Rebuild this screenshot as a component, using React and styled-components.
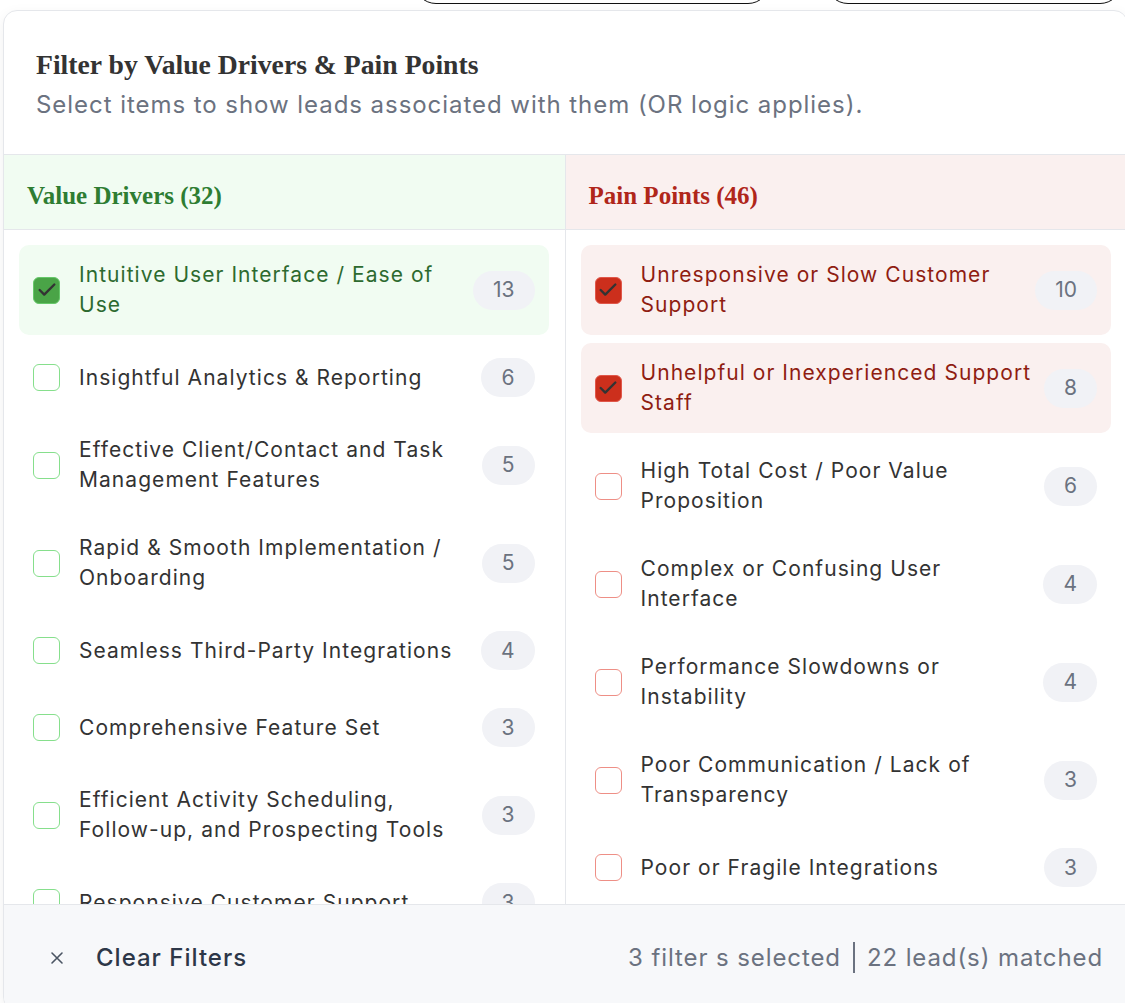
import React from 'react';
import styled, { createGlobalStyle } from 'styled-components';

const GlobalStyle = createGlobalStyle`
  html, body {
    margin: 0;
    padding: 0;
    background: #ffffff;
    overflow: hidden;
  }
  body {
    font-family: Inter, "Noto Sans", "Liberation Sans", sans-serif;
    color: #333333;
  }
`

const Page = styled.div`
  position: relative;
  width: 1125px;
  height: 1003px;
  overflow: hidden;
`

const Toolbar = styled.div`
  display: flex;
  gap: 56px;
  padding-left: 414px;
  margin-top: -40px;
`

const PillButton = styled.div`
  width: ${(p) => p.w}px;
  height: 42px;
  border: 1.5px solid #111;
  border-radius: 24px;
  background: #fff;
`

const Popover = styled.div`
  position: absolute;
  left: 3px;
  top: 10px;
  width: 1125px;
  height: 1001px;
  box-sizing: border-box;
  background: #fff;
  border: 1px solid #e5e7eb;
  border-radius: 14px;
  box-shadow: 0 4px 14px rgba(0, 0, 0, 0.06);
  display: flex;
  flex-direction: column;
  overflow: hidden;
`

const Header = styled.div`
  padding: 38px 32px 31px;
  border-bottom: 1px solid #e5e7eb;
`

const Title = styled.h3`
  margin: 0;
  font-family: "Liberation Serif", "Times New Roman", serif;
  font-weight: 700;
  font-size: 27.7px;
  line-height: 32px;
  color: #333;
`

const Subtitle = styled.p`
  margin: 6px 0 0;
  font-size: 24px;
  line-height: 36px;
  letter-spacing: 0.95px;
  color: #6b7280;
`

const Columns = styled.div`
  flex: 1;
  min-height: 0;
  display: grid;
  grid-template-columns: 1fr 1fr;
`

const Column = styled.div`
  display: flex;
  flex-direction: column;
  min-height: 0;
  border-right: ${(p) => (p.first ? '1px solid #e5e7eb' : 'none')};
`

const ColumnHeader = styled.div`
  height: 75px;
  box-sizing: border-box;
  display: flex;
  align-items: center;
  padding: 8px 23px 0;
  background: ${(p) => (p.tone === 'green' ? '#f1fcf2' : '#faf0ef')};
  border-bottom: 1px solid #e5e7eb;
  font-family: "Liberation Serif", "Times New Roman", serif;
  font-weight: 700;
  font-size: 25px;
  color: ${(p) => (p.tone === 'green' ? '#2e7d32' : '#b0261a')};
`

const List = styled.div`
  flex: 1;
  min-height: 0;
  overflow: hidden;
  padding: 15px 16px 15px 15px;
  display: flex;
  flex-direction: column;
  gap: 8px;
`

const Item = styled.label`
  display: flex;
  align-items: center;
  gap: 10px;
  padding: 15px 14px;
  border-radius: 10px;
  background: ${(p) =>
    p.checked ? (p.tone === 'green' ? '#f1fcf2' : '#faf0ef') : 'transparent'};
  cursor: pointer;
`

const Box = styled.span`
  flex-shrink: 0;
  width: 27px;
  height: 27px;
  margin-right: 9px;
  box-sizing: border-box;
  border-radius: 6px;
  display: flex;
  align-items: center;
  justify-content: center;
  border: 1.5px solid ${(p) => (p.tone === 'green' ? '#86df8c' : '#ee8f86')};
  background: ${(p) =>
    p.checked ? (p.tone === 'green' ? '#4aa447' : '#cc2f1c') : '#fff'};
  ${(p) => p.checked && `border-color: ${p.tone === 'green' ? '#66c86a' : '#e0574a'};`}
`

const Label = styled.span`
  flex: 1;
  font-size: 21px;
  line-height: 30px;
  letter-spacing: 1.05px;
  color: ${(p) =>
    p.checked ? (p.tone === 'green' ? '#2d6a2f' : '#8f1d12') : '#333'};
`

const Count = styled.span`
  flex-shrink: 0;
  padding: 4.5px 20px;
  border-radius: 20px;
  background: #f1f2f6;
  font-size: 21px;
  line-height: 30px;
  color: #6b7280;
`

const Footer = styled.div`
  height: 106px;
  flex-shrink: 0;
  box-sizing: border-box;
  display: flex;
  align-items: center;
  justify-content: space-between;
  padding: 0 24px 0 46px;
  background: #f7f8fa;
  border-top: 1px solid #e5e7eb;
`

const ClearButton = styled.button`
  display: flex;
  align-items: center;
  gap: 32px;
  border: none;
  background: none;
  padding: 0;
  font-family: inherit;
  font-size: 24px;
  font-weight: 500;
  letter-spacing: 1px;
  color: #2d3748;
  cursor: pointer;
`

const Status = styled.div`
  display: flex;
  align-items: center;
  font-size: 24px;
  letter-spacing: 0.9px;
  color: #6b7280;
`

const Divider = styled.span`
  display: inline-block;
  width: 2px;
  height: 31px;
  background: #6b7280;
  margin: 0 12px;
`

const valueDrivers = [
  { label: 'Intuitive User Interface / Ease of Use', count: 13, checked: true },
  { label: 'Insightful Analytics & Reporting', count: 6 },
  { label: 'Effective Client/Contact and Task Management Features', count: 5 },
  { label: 'Rapid & Smooth Implementation / Onboarding', count: 5 },
  { label: 'Seamless Third-Party Integrations', count: 4 },
  { label: 'Comprehensive Feature Set', count: 3 },
  { label: 'Efficient Activity Scheduling, Follow-up, and Prospecting Tools', count: 3 },
  { label: 'Responsive Customer Support', count: 3 },
  { label: 'Customizable Workflows', count: 2 },
];

const painPoints = [
  { label: 'Unresponsive or Slow Customer Support', count: 10, checked: true },
  { label: 'Unhelpful or Inexperienced Support Staff', count: 8, checked: true },
  { label: 'High Total Cost / Poor Value Proposition', count: 6 },
  { label: 'Complex or Confusing User Interface', count: 4 },
  { label: 'Performance Slowdowns or Instability', count: 4 },
  { label: 'Poor Communication / Lack of Transparency', count: 3 },
  { label: 'Poor or Fragile Integrations', count: 3 },
  { label: 'Limited Reporting Capabilities', count: 2 },
];

function CheckMark() {
  return (
    <svg width="22" height="22" viewBox="0 0 24 24" fill="none" stroke="#333" strokeWidth="2.6" strokeLinecap="round" strokeLinejoin="round">
      <path d="M20 6 9 17l-5-5" />
    </svg>
  );
}

function FilterColumn({ title, tone, items, first }) {
  return (
    <Column first={first}>
      <ColumnHeader tone={tone}>{title}</ColumnHeader>
      <List>
        {items.map((item) => (
          <Item key={item.label} tone={tone} checked={item.checked}>
            <Box tone={tone} checked={item.checked}>
              {item.checked ? <CheckMark /> : null}
            </Box>
            <Label tone={tone} checked={item.checked}>{item.label}</Label>
            <Count>{item.count}</Count>
          </Item>
        ))}
      </List>
    </Column>
  );
}

export default function App() {
  return (
    <>
      <GlobalStyle />
      <Page>
        <Toolbar>
          <PillButton w={354} />
          <PillButton w={294} />
        </Toolbar>
        <Popover>
          <Header>
            <Title>Filter by Value Drivers &amp; Pain Points</Title>
            <Subtitle>Select items to show leads associated with them (OR logic applies).</Subtitle>
          </Header>
          <Columns>
            <FilterColumn first title="Value Drivers (32)" tone="green" items={valueDrivers} />
            <FilterColumn title="Pain Points (46)" tone="red" items={painPoints} />
          </Columns>
          <Footer>
            <ClearButton>
              <svg width="14" height="14" viewBox="0 0 14 14" stroke="#4b5563" strokeWidth="1.6" strokeLinecap="round">
                <path d="M2 2l10 10M12 2 2 12" />
              </svg>
              Clear Filters
            </ClearButton>
            <Status>
              3 filter s selected
              <Divider />
              22 lead(s) matched
            </Status>
          </Footer>
        </Popover>
      </Page>
    </>
  );
}
